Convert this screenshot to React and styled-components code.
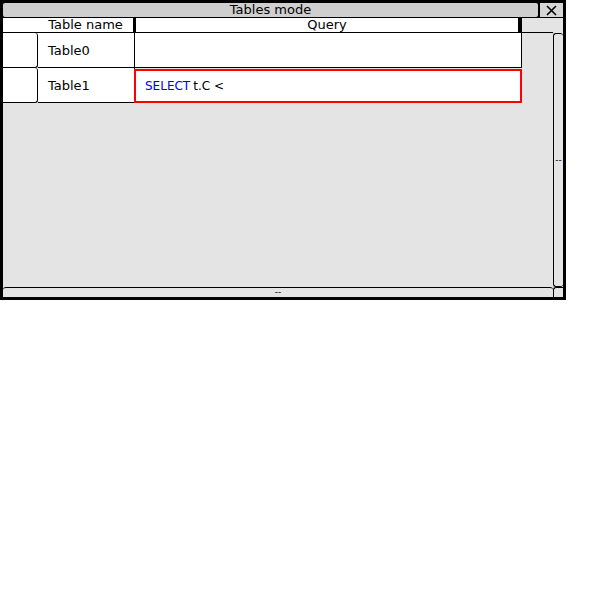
import React from "react";
import styled, { createGlobalStyle } from "styled-components";

const Global = createGlobalStyle`
  html, body { margin: 0; padding: 0; background: #fff; }
  body { font-family: "DejaVu Sans", Verdana, sans-serif; font-size: 13px; color: #000; }
`;

const Window = styled.div`
  width: 566px;
  height: 300px;
  box-sizing: border-box;
  padding: 3px;
  background: #000;
  display: flex;
  flex-direction: column;
`;

const TitleRow = styled.div`
  height: 15px;
  display: flex;
  gap: 2px;
`;

const TitleBar = styled.div`
  flex: 1;
  height: 14px;
  background: #cfcfcf;
  border-radius: 2px;
  display: flex;
  align-items: center;
  justify-content: center;
  font-size: 13px;
  line-height: 14px;
`;

const CloseButton = styled.div`
  width: 23px;
  height: 14px;
  background: #d6d6d6;
  display: flex;
  align-items: center;
  justify-content: center;
`;

const Main = styled.div`
  flex: 1;
  display: grid;
  grid-template-columns: 1fr 10px;
  grid-template-rows: 15px 1fr 10px;
  background: #e4e4e4;
`;

const Header = styled.div`
  grid-column: 1 / 3;
  display: grid;
  grid-template-columns: 35px 95px 3px 382px 4px 1fr;
  height: 15px;
`;

const HeadCell = styled.div`
  background: #fff;
  border-bottom: 1px solid #000;
  box-sizing: border-box;
  text-align: center;
  font-size: 13px;
  line-height: 14px;
`;

const HeadFiller = styled.div`
  background: #e4e4e4;
  position: relative;
  &::after {
    content: "";
    position: absolute;
    left: 0;
    right: 10px;
    bottom: 0;
    height: 1px;
    background: #000;
  }
`;

const HeadBar = styled.div`
  background: #000;
`;

const Body = styled.div`
  display: flex;
  flex-direction: column;
`;

const Row = styled.div`
  display: grid;
  grid-template-columns: 35px 97px 387px;
  height: 35px;
`;

const RowHead = styled.div`
  background: #fff;
  border: 1px solid #000;
  border-left: none;
  border-top: none;
  border-radius: 0 3px 3px 0;
  box-sizing: border-box;
`;

const Cell = styled.div`
  background: #fff;
  box-sizing: border-box;
  border-bottom: 1px solid #000;
  border-right: 1px solid #000;
  display: flex;
  align-items: center;
  padding-left: 10px;
  font-size: 13px;
  ${(p) =>
    p.$active &&
    `
    font-size: 12px;
    border: 2px solid #ff0000;
    margin-top: 1px;
    margin-left: -1px;
    padding-left: 9px;
  `}
`;

const Keyword = styled.span`
  color: #0000ee;
  margin-right: 3px;
`;

const VScroll = styled.div`
  border: 1px solid #000;
  border-right: none;
  border-radius: 3px;
  display: flex;
  align-items: center;
  justify-content: center;
  font-size: 9px;
  line-height: 9px;
`;

const HScroll = styled.div`
  border-top: 1px solid #000;
  border-radius: 3px;
  display: flex;
  align-items: center;
  justify-content: center;
  font-size: 9px;
  line-height: 9px;
`;

const Corner = styled.div`
  border-left: 1px solid #000;
  border-top: 1px solid #000;
  border-radius: 3px 0 0 0;
`;

export default function App() {
  return (
    <>
      <Global />
      <Window>
        <TitleRow>
          <TitleBar>Tables mode</TitleBar>
          <CloseButton>
            <svg width="11" height="11" viewBox="0 0 11 11">
              <path d="M1 1 L10 10 M10 1 L1 10" stroke="#000" strokeWidth="1.6" />
            </svg>
          </CloseButton>
        </TitleRow>
        <Main>
          <Header>
            <HeadCell />
            <HeadCell>Table name</HeadCell>
            <HeadBar />
            <HeadCell>Query</HeadCell>
            <HeadBar />
            <HeadFiller />
          </Header>
          <Body>
            <Row>
              <RowHead />
              <Cell>Table0</Cell>
              <Cell />
            </Row>
            <Row>
              <RowHead />
              <Cell>Table1</Cell>
              <Cell $active>
                <Keyword>SELECT</Keyword>t.C &lt;
              </Cell>
            </Row>
          </Body>
          <VScroll>--</VScroll>
          <HScroll>--</HScroll>
          <Corner />
        </Main>
      </Window>
    </>
  );
}
